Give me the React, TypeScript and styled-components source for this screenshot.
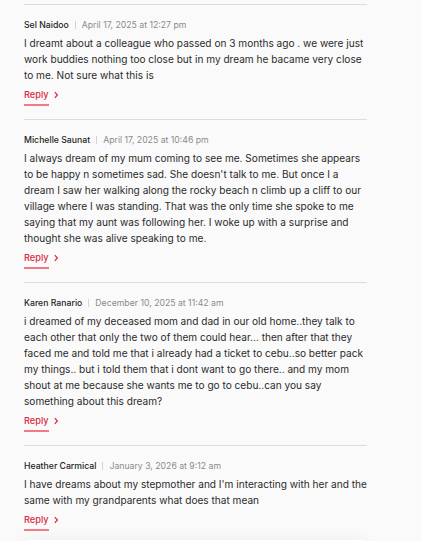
import React from "react";
import styled, { createGlobalStyle } from "styled-components";

const GlobalStyle = createGlobalStyle`
  html, body {
    margin: 0;
    padding: 0;
    background: #fafafa;
  }
  body {
    font-family: Inter, "Noto Sans", sans-serif;
    -webkit-font-smoothing: antialiased;
  }
`;

const Page = styled.div`
  width: 343px;
  padding: 4px 54px 0 24px;
  overflow: hidden;
  height: 537px;
`;

const CommentList = styled.ol`
  list-style: none;
  margin: 0;
  padding: 0;
  border-top: 1px solid #dcdcdc;
`;

const CommentItem = styled.li`
  padding: 13px 0 13px;
  border-bottom: 1px solid #dcdcdc;

  &:last-child {
    border-bottom: none;
    padding-bottom: 9px;
  }
`;

const Meta = styled.div`
  display: flex;
  align-items: center;
  font-size: 8.7px;
  line-height: 14px;
  margin-bottom: 3px;
`;

const Author = styled.span`
  color: #1f1f1f;
  font-weight: 500;
`;

const Sep = styled.span`
  display: inline-block;
  width: 1px;
  height: 8px;
  background: #d4d4d4;
  margin: 0 6px;
`;

const Date = styled.span`
  color: #8a8a8a;
`;

const Body = styled.p`
  margin: 0;
  font-size: 10.1px;
  line-height: 16px;
  color: #2b2b2b;
`;

const ReplyLink = styled.a`
  display: flex;
  width: fit-content;
  align-items: center;
  margin-top: 5px;
  font-size: 9.2px;
  line-height: 14px;
  color: #d9283d;
  font-weight: 500;
  text-decoration: none;
  cursor: pointer;
`;

const ReplyWord = styled.span`
  display: block;
  padding-bottom: 2px;
  border-bottom: 2px solid #f07a86;
`;

const Chevron = styled.svg`
  display: block;
  margin-left: 4px;
  margin-bottom: 4px;
`;

const FormCard = styled.div`
  height: 120px;
  background: #ffffff;
  border-radius: 6px;
  box-shadow: 0 0 18px rgba(0, 0, 0, 0.06);
`;

type Comment = { author: string; date: string; text: string };

const comments: Comment[] = [
  {
    author: "Sel Naidoo",
    date: "April 17, 2025 at 12:27 pm",
    text: "I dreamt about a colleague who passed on 3 months ago . we were just work buddies nothing too close but in my dream he bacame very close to me. Not sure what this is",
  },
  {
    author: "Michelle Saunat",
    date: "April 17, 2025 at 10:46 pm",
    text: "I always dream of my mum coming to see me. Sometimes she appears to be happy n sometimes sad. She doesn't talk to me. But once I a dream I saw her walking along the rocky beach n climb up a cliff to our village where I was standing. That was the only time she spoke to me saying that my aunt was following her. I woke up with a surprise and thought she was alive speaking to me.",
  },
  {
    author: "Karen Ranario",
    date: "December 10, 2025 at 11:42 am",
    text: "i dreamed of my deceased mom and dad in our old home..they talk to each other that only the two of them could hear... then after that they faced me and told me that i already had a ticket to cebu..so better pack my things.. but i told them that i dont want to go there.. and my mom shout at me because she wants me to go to cebu..can you say something about this dream?",
  },
  {
    author: "Heather Carmical",
    date: "January 3, 2026 at 9:12 am",
    text: "I have dreams about my stepmother and I'm interacting with her and the same with my grandparents what does that mean",
  },
];

export default function App() {
  return (
    <>
      <GlobalStyle />
      <Page>
        <CommentList>
          {comments.map((c) => (
            <CommentItem key={c.author}>
              <Meta>
                <Author>{c.author}</Author>
                <Sep />
                <Date>{c.date}</Date>
              </Meta>
              <Body>{c.text}</Body>
              <ReplyLink>
                <ReplyWord>Reply</ReplyWord>
                <Chevron width="6" height="8" viewBox="0 0 6 8">
                  <path d="M1.8 1.2 L4.4 4 L1.8 6.8" fill="none" stroke="#d9283d" strokeWidth="1.2" />
                </Chevron>
              </ReplyLink>
            </CommentItem>
          ))}
        </CommentList>
        <FormCard />
      </Page>
    </>
  );
}
